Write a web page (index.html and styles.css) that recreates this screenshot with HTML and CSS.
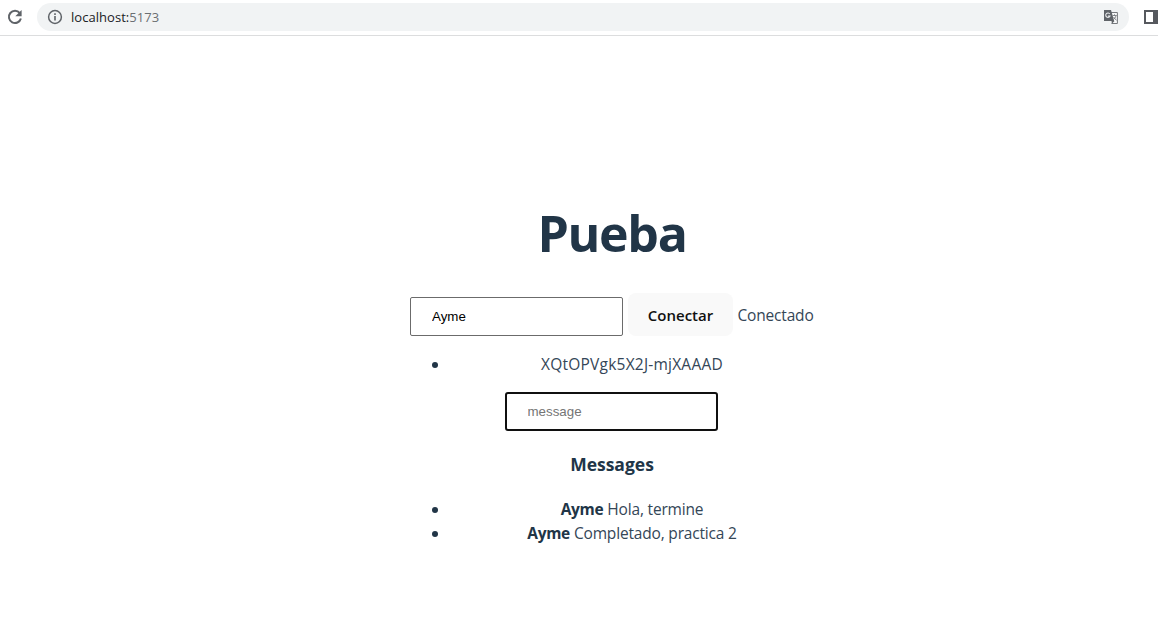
FILE: index.html
```html
<!DOCTYPE html>
<html lang="es">
<head>
<meta charset="utf-8">
<title>Pueba</title>
<link rel="stylesheet" href="styles.css">
</head>
<body>
<header class="toolbar">
  <svg class="reload" width="18" height="18" viewBox="0 0 18 18"><path d="M13.8 5.1A6.1 6.1 0 1 0 14.9 10.5" fill="none" stroke="#5f6368" stroke-width="2"/><path d="M15.6 1.9v6.3H9.3z" fill="#5f6368"/></svg>
  <div class="address">
    <svg width="16" height="16" viewBox="0 0 16 16"><circle cx="8" cy="8" r="6.4" fill="none" stroke="#5f6368" stroke-width="1.5"/><path d="M8 7v4.6M8 4.3v1.6" stroke="#5f6368" stroke-width="1.6"/></svg>
    <span class="url">localhost:<span class="port">5173</span></span>
    <svg class="translate" width="16" height="16" viewBox="0 0 16 16"><path d="M7 3.5h7.4v11H8.5" fill="#f8f9fa" stroke="#777a7e"/><path d="M1 1h7l3.2 11H1z" fill="#5f6368"/><path d="M6.8 5A2.2 2.2 0 1 0 7 7H5" fill="none" stroke="#e8eaed" stroke-width="1.1"/><path d="M8.5 12h3l-2.6 2.8z" fill="#5f6368"/><path d="M9.5 6.5h4.2M11.5 5.3v1.2M13 6.5c-.4 2-1.5 3.3-2.6 4.2M10.5 8l3 3.4" fill="none" stroke="#777a7e" stroke-width=".9"/></svg>
  </div>
  <svg class="panel" width="14" height="14" viewBox="0 0 14 14"><path d="M0 0h14v14H0z" fill="#56595e"/><path d="M2 2h7v10H2z" fill="#fff"/></svg>
</header>
<main class="app">
  <h1 class="title">Pueba</h1>
  <div class="connect">
    <input class="field" type="text" value="Ayme">
    <button class="button" type="button">Conectar</button>
    <span class="status">Conectado</span>
  </div>
  <ul class="list users"><li><span class="id">XQtOPVgk5X2J-mjXAAAD</span></li></ul>
  <input class="field active" type="text" placeholder="message">
  <h3 class="subtitle">Messages</h3>
  <ul class="list">
    <li><b class="name">Ayme</b> <span class="text">Hola, termine</span></li>
    <li><b class="name">Ayme</b> <span class="text">Completado, practica 2</span></li>
  </ul>
</main>
</body>
</html>
```
FILE: styles.css
```css
* { box-sizing: border-box; }
body {
  margin: 0;
  height: 623px;
  overflow: hidden;
  background: #fff;
  color: #213547;
  font: 400 15.5px/24px "Open Sans", "Noto Sans", sans-serif;
}
.toolbar {
  display: flex;
  align-items: center;
  height: 36px;
  padding: 0 0 2px 6px;
  border-bottom: 1px solid #dcddde;
}
.reload { flex: none; margin-right: 13px; }
.address {
  display: flex;
  align-items: center;
  flex: none;
  width: 1092px;
  height: 28px;
  padding: 0 10px;
  border-radius: 14px;
  background: #f1f3f4;
}
.url { margin-left: 8px; color: #202124; font: 400 13px/20px "Open Sans", sans-serif; letter-spacing: .04px; }
.port { color: #6b6f73; }
.translate { margin-left: auto; }
.panel { flex: none; margin-left: 15px; }
.app {
  display: flex;
  flex-direction: column;
  align-items: center;
  width: 404px;
  margin-left: 410px;
  padding-top: 168px;
}
.title {
  margin: 0 0 31px;
  font: 700 50px/58px "Open Sans", sans-serif;
  letter-spacing: -1.3px;
}
.connect { display: flex; width: 404px; height: 43px; }
.field {
  width: 213px;
  height: 39px;
  margin: 4px 5px 0 0;
  padding: 0 21px;
  border: 1px solid #6b6b6b;
  border-radius: 2px;
  background: #fff;
  color: #000;
  font: 13.333px "Liberation Sans", Arial, sans-serif;
}
.field::placeholder { color: #757575; }
.button {
  width: 105px;
  height: 43px;
  margin-right: 5px;
  padding: 2px 0 0;
  border: 0;
  border-radius: 8px;
  background: #f9f9f9;
  color: #111;
  font: 600 15px/41px "Open Sans", sans-serif;
}
.status { margin-left: -.5px; line-height: 44px; white-space: nowrap; }
.status, .text, .id { color: #344657; }
.status, .text { letter-spacing: -.18px; }
.id { letter-spacing: .22px; }
.list {
  width: 404px;
  margin: 0;
  padding-left: 40px;
  text-align: center;
  white-space: nowrap;
}
.users { margin-top: 16px; }
.active { margin: 16px 1px 0 0; padding: 0 20.5px; border: 2px solid #101010; border-radius: 3px; }
.subtitle { margin: 21px 0 20px; font: 700 17.5px/25px "Open Sans", sans-serif; letter-spacing: 0; }
.name { font-weight: 700; letter-spacing: -.3px; }
```
